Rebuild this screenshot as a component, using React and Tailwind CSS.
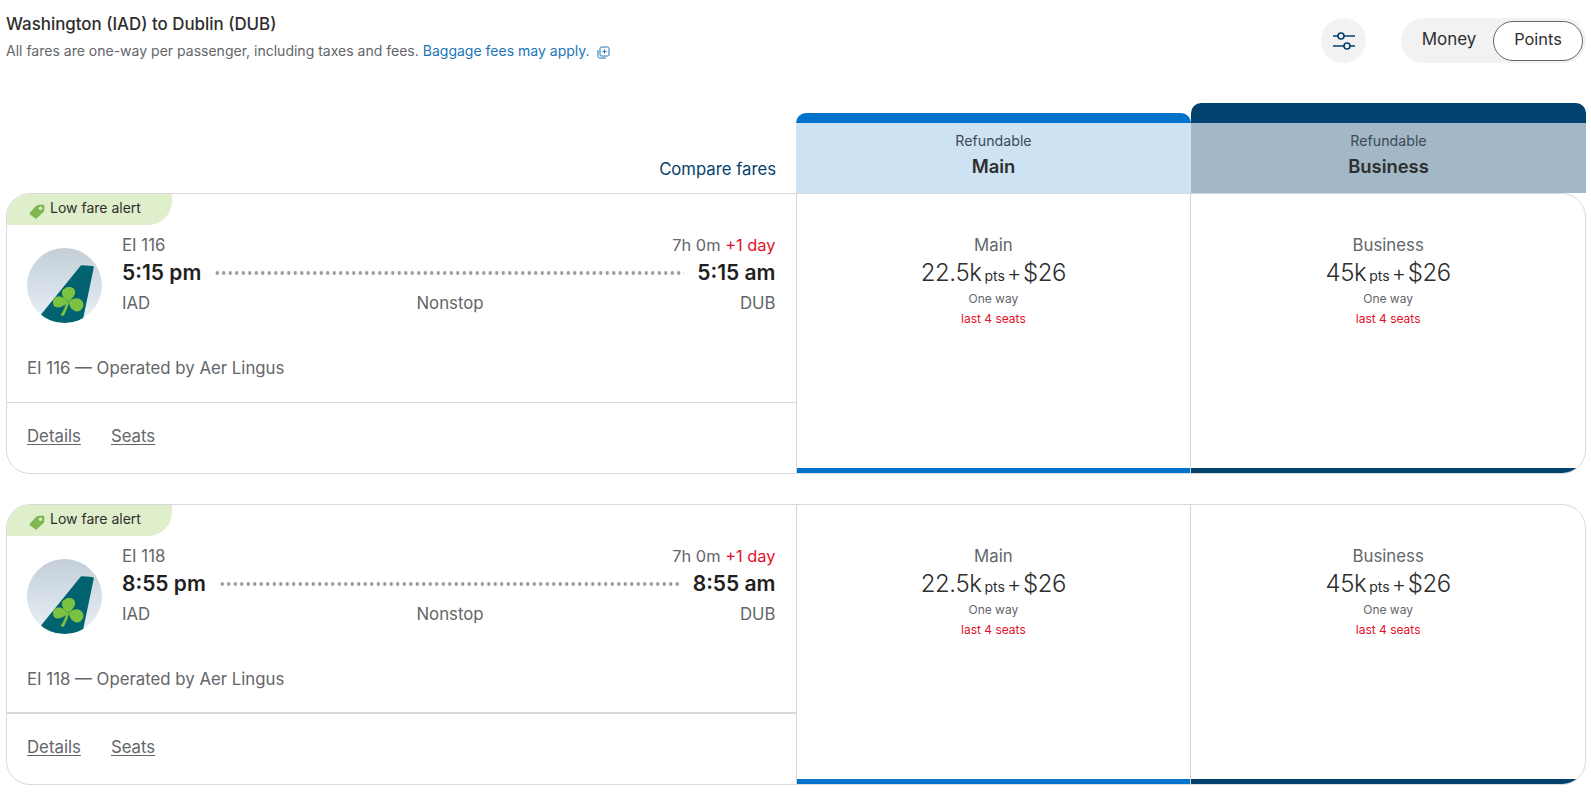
import React from "react";

const FONT = { fontFamily: '"Inter", "Liberation Sans", sans-serif' };

const flights = [
  { id: "EI 116", dep: "5:15 pm", arr: "5:15 am", divider: "border-b" },
  { id: "EI 118", dep: "8:55 pm", arr: "8:55 am", divider: "border-b-2" },
];

const fares = [
  { name: "Main", amount: "22.5k", bar: "bg-[#0074ca]" },
  { name: "Business", amount: "45k", bar: "bg-[#03426e]" },
];

const TailLogo = () => (
  <svg width="75" height="75" viewBox="0 0 75 75" className="shrink-0 mt-[14px]">
    <defs>
      <linearGradient id="sky" x1="0" y1="0" x2="0" y2="1">
        <stop offset="0" stopColor="#c3ced8" />
        <stop offset="1" stopColor="#e9f1f7" />
      </linearGradient>
      <clipPath id="disc">
        <circle cx="37.5" cy="37.5" r="37.5" />
      </clipPath>
    </defs>
    <circle cx="37.5" cy="37.5" r="37.5" fill="url(#sky)" />
    <g clipPath="url(#disc)">
      <path d="M53 18.5 Q53.8 17.3 55 17.3 L65.5 18 Q67 18.2 66.8 19.5 L55 76 L10 76 L14 66.5 Z" fill="#00636f" />
    </g>
    <g fill="#7cc242">
      <path d="M41 54 C34 49 33 42 38 40.500 C40 38.500 45 38.500 47 41 C50 44 47 50 41 54 Z" />
      <path d="M40 55 C35 60 28 61 26.500 57 C25 53 27 48.500 31 48.500 C35 48 39 50 40 55 Z" />
      <path d="M42 54 C45 50 52 49 54.500 52.500 C58 55 56.500 61 52.500 63 C48 65 42 60 42 54 Z" />
      <path d="M39.500 53 L42 54 C41 59 38.500 65 36.500 68 L33.500 67 C36.500 63 38.500 58 39.500 53 Z" />
    </g>
  </svg>
);

const TagIcon = () => (
  <svg width="16" height="15" viewBox="0 0 16 15" className="shrink-0 mt-[3px]">
    <path d="M0.800 8.700 L7.200 1.800 Q8 1 9 1 L13.500 0.500 Q15.500 0.500 15.500 2.500 L15.200 6.500 Q15.100 7.500 14.300 8.300 L7.800 14.300 Q7 15 6.200 14.300 L0.800 10.300 Q0.100 9.500 0.800 8.700 Z" fill="#7fb84e" />
    <circle cx="11.500" cy="4.300" r="1.700" fill="#e0eecb" />
  </svg>
);

const ExternalIcon = () => (
  <svg width="13" height="13" viewBox="0 0 13 13" fill="none" stroke="#1a76b8" strokeWidth="1" className="ml-[7px] inline-block align-[-3px]">
    <rect x="3" y="1" width="9" height="9" rx="1.500" />
    <path d="M1 4 V10.500 Q1 12 2.500 12 H9" />
    <path d="M7.500 3.500 V7.500 M5.500 5.500 H9.500" />
  </svg>
);

const SlidersIcon = () => (
  <svg width="24" height="18" viewBox="0 0 24 18" fill="none" stroke="#03426e" strokeWidth="1.600">
    <path d="M1 4 H6 M12 4 H23 M1 14 H12 M18 14 H23" />
    <circle cx="9" cy="4" r="3" />
    <circle cx="15" cy="14" r="3" />
  </svg>
);

const FareHeader = ({ name, topBar, tint, height }) => (
  <div className={`w-[395px] ${height} rounded-t-[10px] overflow-hidden flex flex-col`}>
    <div className={`${topBar} flex-1`} />
    <div className={`${tint} h-[70px] flex flex-col items-center pt-[8px] text-[#2e2e2e]`}>
      <span className="text-[14.2px] leading-[20px] text-[#3d4a55]">Refundable</span>
      <span className="text-[18.4px] leading-[28px] mt-[1px] font-semibold">{name}</span>
    </div>
  </div>
);

const FareCell = ({ fare }) => (
  <div className="w-[395px] border-l border-[#d5d5d5] flex flex-col justify-between">
    <div className="flex flex-col items-center pt-[40px]">
      <span className="text-[16.8px] leading-[22px] text-[#63666a]">{fare.name}</span>
      <span className="text-[24px] leading-[32px] mt-[1px] font-light tracking-[-0.4px] text-[#2e2e2e] whitespace-nowrap">
        {fare.amount}
        <span className="text-[14px] font-normal tracking-normal ml-[3px]">pts</span>
        <span className="text-[22px] mx-[2px]">+</span>
        $26
      </span>
      <span className="text-[12px] leading-[18px] -mt-[2px] text-[#63666a]">One way</span>
      <span className="text-[12px] leading-[20px] mt-[1px] text-[#e1112b]">last 4 seats</span>
    </div>
    <div className={`${fare.bar} h-[5px]`} />
  </div>
);

const FlightCard = ({ flight }) => (
  <div className="w-[1580px] h-[281px] border border-[#d9d9d9] rounded-[24px] overflow-hidden flex bg-white">
    <div className="w-[789px] flex flex-col">
      <div className="w-[165px] h-[31px] bg-[#dfeecb] rounded-br-[24px] flex items-center gap-[5px] pl-[22px] text-[14px] text-[#2e2e2e]">
        <TagIcon />
        <span className="pb-[4px]">Low fare alert</span>
      </div>
      <div className="flex items-start px-[20px] pt-[9px] gap-[20px]">
        <TailLogo />
        <div className="flex-1 flex flex-col">
          <div className="flex justify-between text-[16.8px] leading-[22px] text-[#63666a]">
            <span>{flight.id}</span>
            <span className="text-[16.4px]">7h 0m <span className="text-[#e1112b]">+1 day</span></span>
          </div>
          <div className="flex items-center gap-[13px] text-[21px] leading-[34px] font-semibold text-[#1f1f1f]">
            <span>{flight.dep}</span>
            <div className="flex-1 h-[4px] bg-[radial-gradient(circle,#9a9a9a_1.6px,transparent_2px)] bg-[length:6.5px_4px]" />
            <span>{flight.arr}</span>
          </div>
          <div className="flex justify-between text-[16.8px] leading-[26px] text-[#63666a]">
            <span>IAD</span>
            <span className="ml-[10px]">Nonstop</span>
            <span>DUB</span>
          </div>
        </div>
      </div>
      <div className={`flex-1 ${flight.divider} border-[#d9d9d9] pl-[20px] pt-[33px] text-[16.8px] leading-[24px] text-[#63666a]`}>
        {flight.id} — Operated by Aer Lingus
      </div>
      <div className="h-[70px] shrink-0 flex gap-[30px] pl-[20px] pt-[21px] text-[16.8px] leading-[24px] text-[#63666a] underline underline-offset-2">
        <span>Details</span>
        <span>Seats</span>
      </div>
    </div>
    {fares.map((fare) => (
      <FareCell key={fare.name} fare={fare} />
    ))}
  </div>
);

export default function App() {
  return (
    <div className="w-[1591px] h-[797px] bg-white overflow-hidden pl-[6px]" style={FONT}>
      <div className="w-[1580px] h-[103px] flex items-start justify-between">
        <div className="pt-[14px]">
          <h1 className="text-[16.9px] leading-[20px] font-medium text-[#2e2e2e]">Washington (IAD) to Dublin (DUB)</h1>
          <p className="mt-[7px] text-[14.03px] leading-[20px] text-[#63666a]">
            All fares are one-way per passenger, including taxes and fees.{" "}
            <span className="text-[#1a76b8]">Baggage fees may apply.</span>
            <ExternalIcon />
          </p>
        </div>
        <div className="flex items-center gap-[35px] pt-[18px]">
          <div className="w-[45px] h-[45px] rounded-full bg-[#f2f2f2] flex items-center justify-center">
            <SlidersIcon />
          </div>
          <div className="w-[185px] h-[45px] rounded-full bg-[#f2f2f2] flex items-center text-[17px] text-[#2e2e2e]">
            <span className="w-[92px] pl-[4px] pb-[2px] text-center">Money</span>
            <span className="w-[90px] h-[40px] pb-[2px] rounded-full bg-white border border-[#63666a] flex items-center justify-center text-[16.4px]">Points</span>
          </div>
        </div>
      </div>

      <div className="w-[1580px] h-[90px] flex items-end">
        <div className="w-[790px] pb-[12px] pr-[20px] text-right text-[16.7px] leading-[24px] text-[#03426e]">Compare fares</div>
        <FareHeader name="Main" topBar="bg-[#0074ca]" tint="bg-[#cde3f3]" height="h-[80px]" />
        <FareHeader name="Business" topBar="bg-[#03426e]" tint="bg-[#a2b8c6]" height="h-[90px]" />
      </div>

      <div className="flex flex-col gap-[30px]">
        {flights.map((flight) => (
          <FlightCard key={flight.id} flight={flight} />
        ))}
      </div>
    </div>
  );
}
